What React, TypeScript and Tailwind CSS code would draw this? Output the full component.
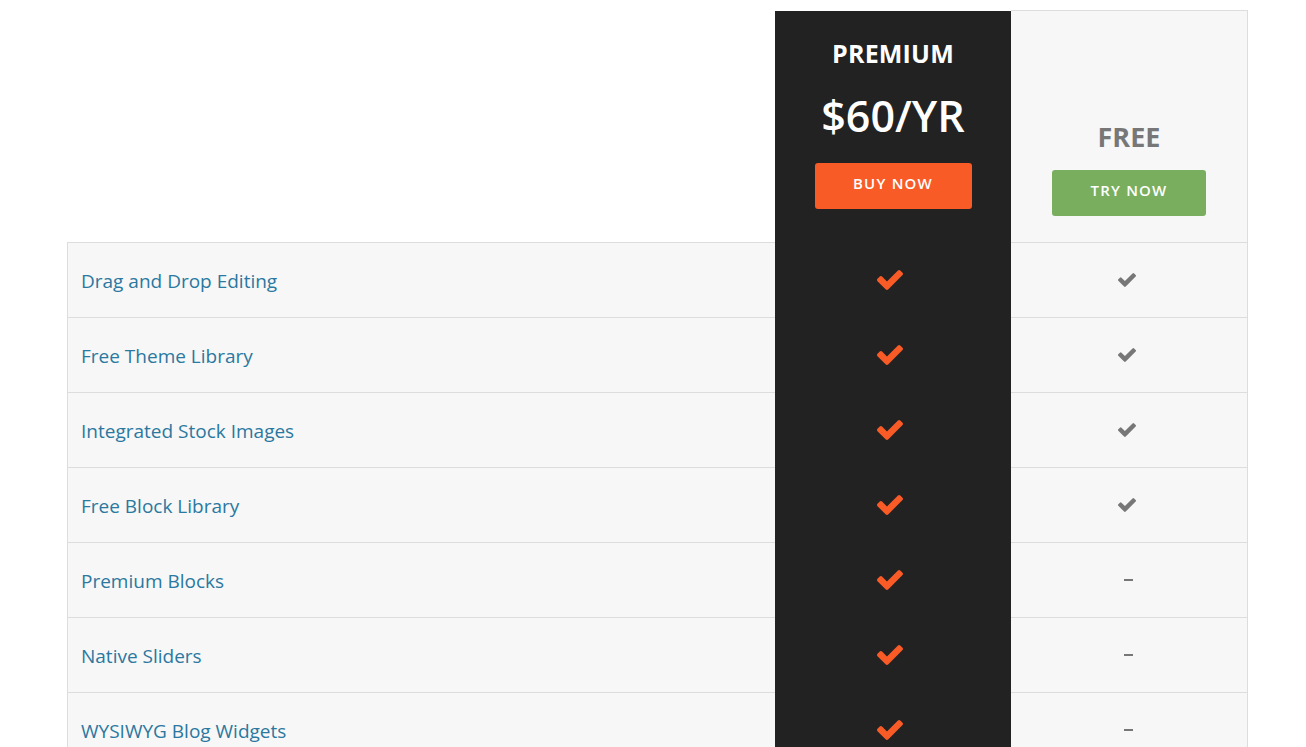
import React from 'react';

type Row = { label: string; free: boolean };

const rows: Row[] = [
  { label: 'Drag and Drop Editing', free: true },
  { label: 'Free Theme Library', free: true },
  { label: 'Integrated Stock Images', free: true },
  { label: 'Free Block Library', free: true },
  { label: 'Premium Blocks', free: false },
  { label: 'Native Sliders', free: false },
  { label: 'WYSIWYG Blog Widgets', free: false },
];

const Check: React.FC<{ className?: string }> = ({ className }) => (
  <svg viewBox="121 334 1550 1188" className={className} fill="currentColor">
    <path d="M1671 566q0 40-28 68l-724 724-136 136q-28 28-68 28t-68-28l-136-136-362-362q-28-28-28-68t28-68l136-136q28-28 68-28t68 28l294 295 656-657q28-28 68-28t68 28l136 136q28 28 28 68z" />
  </svg>
);

export default function App() {
  return (
    <div
      className="h-[747px] overflow-hidden bg-white"
      style={{ fontFamily: '"Open Sans", "Noto Sans", sans-serif' }}
    >
      <div className="ml-[67px] mt-[10px] w-[1181px]">
        {/* header */}
        <div className="flex h-[232px]">
          <div className="w-[708px]" />
          <div className="w-[236px] border-t border-white bg-[#222222] flex flex-col items-center pt-[26px]">
            <div className="text-[25px] leading-[32px] font-bold text-white tracking-[0.2px]">PREMIUM</div>
            <div className="mt-[21px] text-[43px] leading-[52px] font-semibold text-white">$60/YR</div>
            <button className="mt-[21px] w-[157px] h-[46px] pb-[5px] rounded-[3px] bg-[#f95b27] text-white text-[15px] font-semibold tracking-[1.2px]">
              BUY NOW
            </button>
          </div>
          <div className="w-[237px] border-t border-r border-[#dddddd] bg-[#f7f7f7] flex flex-col items-center justify-end pb-[26px]">
            <div className="text-[27px] leading-[32px] font-bold text-[#777777]">FREE</div>
            <button className="mt-[17px] w-[154px] h-[46px] pb-[5px] rounded-[3px] bg-[#79ae5e] text-white text-[15px] font-semibold tracking-[1.2px]">
              TRY NOW
            </button>
          </div>
        </div>

        {/* rows */}
        {rows.map((row) => (
          <div key={row.label} className="flex h-[75px]">
            <div className="w-[708px] border-t border-l border-[#dddddd] bg-[#f7f7f7] flex items-center pl-[13px] pt-[2px]">
              <span className="text-[19px] text-[#2b78a0]">{row.label}</span>
            </div>
            <div className="w-[236px] bg-[#222222] flex items-center justify-center pr-[6px]">
              <Check className="w-[26px] h-[20px] text-[#f95b27]" />
            </div>
            <div className="w-[237px] border-t border-r border-[#dddddd] bg-[#f7f7f7] flex items-center justify-center pr-[4px]">
              {row.free ? (
                <Check className="w-[18px] h-[14px] text-[#777777]" />
              ) : (
                <span className="block w-[9px] h-[2px] bg-[#777777] ml-[3px]" />
              )}
            </div>
          </div>
        ))}
      </div>
    </div>
  );
}
